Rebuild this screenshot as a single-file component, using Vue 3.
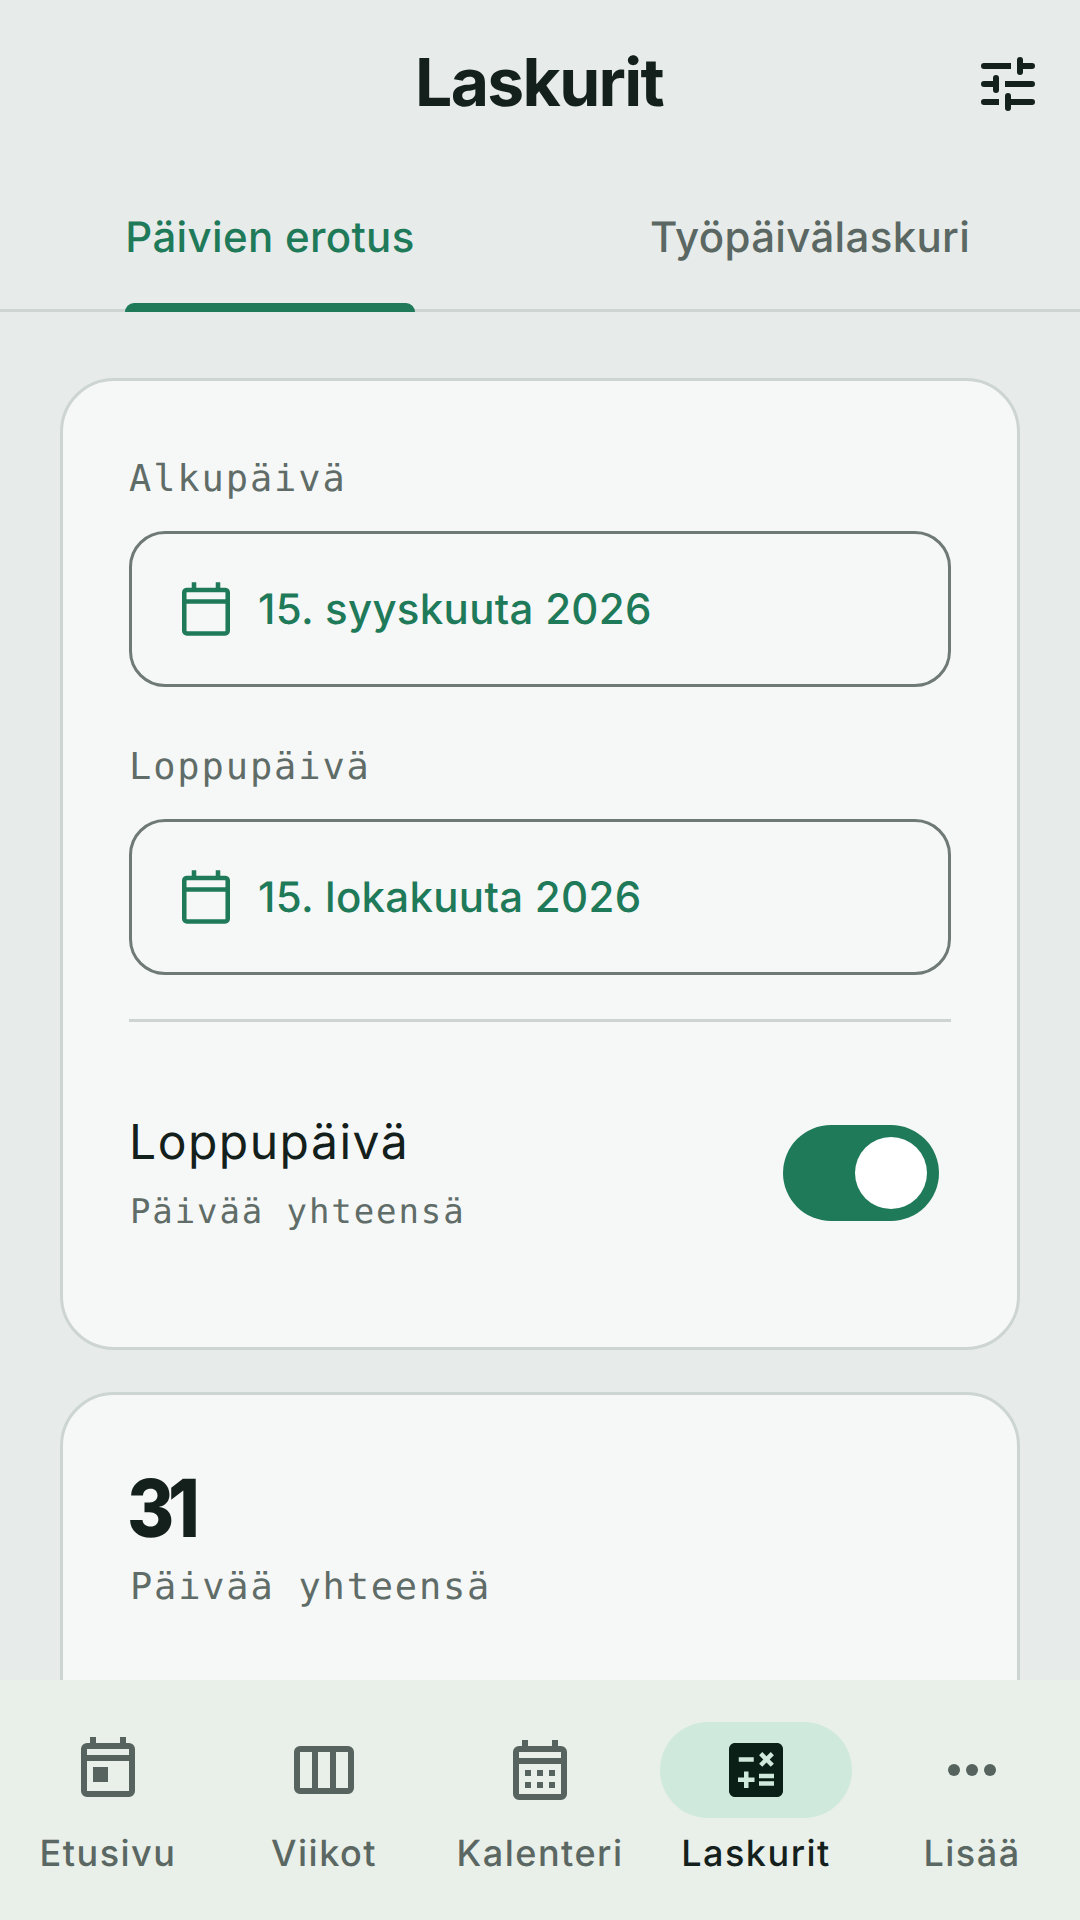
<template>
  <div class="screen">
    <header class="top">
      <span></span>
      <h1>Laskurit</h1>
      <button class="tune" aria-label="Asetukset">
        <svg viewBox="0 0 24 24" width="72" height="72" fill="#14201c">
          <path d="M4 5h9v2H4a1 1 0 0 1 0-2zM17 5h3a1 1 0 0 1 0 2h-3zM4 11h3v2H4a1 1 0 0 1 0-2zM11 11h9a1 1 0 0 1 0 2h-9zM4 17h5v2H4a1 1 0 0 1 0-2zM13 17h7a1 1 0 0 1 0 2h-7z" />
          <rect x="15" y="3" width="2" height="6" rx="1" />
          <rect x="7" y="9" width="2" height="6" rx="1" />
          <rect x="11" y="15" width="2" height="6" rx="1" />
        </svg>
      </button>
    </header>

    <div class="tabs">
      <div v-for="(tab, i) in tabs" :key="tab" class="tab" :class="{ active: i === 0 }">
        <span class="tab-label">{{ tab }}</span>
      </div>
    </div>

    <main class="content">
      <section class="card">
        <div v-for="d in dates" :key="d.label" class="date-group">
          <label class="mono-label">{{ d.label }}</label>
          <div class="date-field">
            <svg viewBox="0 0 24 24" width="64" height="64" fill="none" stroke="#1f7a5a" stroke-width="1.7">
              <rect x="3.85" y="4.85" width="16.3" height="16.3" rx="1" />
              <path d="M3.85 9.2h16.3M7.5 2v3M16.5 2v3" />
            </svg>
            <span>{{ d.value }}</span>
          </div>
        </div>
        <div class="divider"></div>
        <div class="switch-row">
          <div>
            <div class="switch-title">Loppupäivä</div>
            <div class="switch-sub">Päivää yhteensä</div>
          </div>
          <div class="switch"><div class="thumb"></div></div>
        </div>
      </section>

      <section class="card result">
        <div class="number">31</div>
        <div class="result-label">Päivää yhteensä</div>
      </section>
    </main>

    <nav class="bottom">
      <div v-for="item in nav" :key="item.label" class="nav-item" :class="{ active: item.active }">
        <div class="pill">
          <svg viewBox="0 0 24 24" width="72" height="72">
            <template v-if="item.icon === 'today'">
              <g fill="none" stroke="#56635e" stroke-width="2">
                <rect x="4" y="4" width="16" height="16" rx="1" />
                <path d="M4 8h16M7 1v3M17 1v3" />
              </g>
              <rect x="7" y="11" width="5" height="5" fill="#56635e" />
            </template>
            <template v-else-if="item.icon === 'week'">
              <g fill="none" stroke="#56635e" stroke-width="2">
                <rect x="3" y="5" width="18" height="14" rx="1" />
                <path d="M9 5v14M15 5v14" />
              </g>
            </template>
            <template v-else-if="item.icon === 'month'">
              <g fill="none" stroke="#56635e" stroke-width="2">
                <rect x="4" y="5" width="16" height="16" rx="1" />
                <path d="M4 9h16M7 2v3M17 2v3" />
              </g>
              <path fill="#56635e" d="M7 12h2v2H7zM11 12h2v2h-2zM15 12h2v2h-2zM7 16h2v2H7zM11 16h2v2h-2zM15 16h2v2h-2z" />
            </template>
            <template v-else-if="item.icon === 'calc'">
              <path fill="#0a1f16" d="M19 3H5c-1.1 0-2 .9-2 2v14c0 1.1.9 2 2 2h14c1.1 0 2-.9 2-2V5c0-1.100-.9-2-2-2z" />
              <path fill="#cfe9dc" d="M6.250 7.720h5v1.500h-5zM13 15.750h5v1.500h-5zM13 13.250h5v1.500h-5zM8 18h1.500v-2h2v-1.500h-2v-2H8v2H6V16h2zM14.090 10.950L15.500 9.540l1.410 1.410 1.060-1.060-1.410-1.420 1.410-1.410L16.910 6 15.500 7.410 14.090 6l-1.060 1.060 1.410 1.410-1.410 1.420z" />
            </template>
            <g v-else fill="#56635e">
              <circle cx="6" cy="12" r="2" />
              <circle cx="12" cy="12" r="2" />
              <circle cx="18" cy="12" r="2" />
            </g>
          </svg>
        </div>
        <span class="nav-label">{{ item.label }}</span>
      </div>
    </nav>
  </div>
</template>

<script setup>
const tabs = ['Päivien erotus', 'Työpäivälaskuri']

const dates = [
  { label: 'Alkupäivä', value: '15. syyskuuta 2026' },
  { label: 'Loppupäivä', value: '15. lokakuuta 2026' },
]

const nav = [
  { label: 'Etusivu', icon: 'today' },
  { label: 'Viikot', icon: 'week' },
  { label: 'Kalenteri', icon: 'month' },
  { label: 'Laskurit', icon: 'calc', active: true },
  { label: 'Lisää', icon: 'more' },
]
</script>

<style scoped>
.screen {
  width: 1080px;
  height: 1920px;
  display: flex;
  flex-direction: column;
  overflow: hidden;
  background: #e7ebe9;
  color: #14201c;
  font-family: Inter, "Liberation Sans", sans-serif;
  text-rendering: geometricPrecision;
}

.top {
  height: 164px;
  padding: 0 36px;
  display: grid;
  grid-template-columns: 1fr auto 1fr;
  align-items: center;
  box-sizing: border-box;
}

.top h1 {
  margin: 0 0 0 -2px;
  font-size: 66px;
  font-weight: 700;
  letter-spacing: -1.7px;
  line-height: 80px;
}

.tune {
  justify-self: end;
  width: 72px;
  height: 72px;
  margin-top: 4px;
  padding: 0;
  border: 0;
  background: none;
}

.tabs {
  display: flex;
  border-bottom: 3px solid #ccd5d2;
  height: 145px;
}

.tab {
  flex: 1;
  display: flex;
  justify-content: center;
  color: #5a6762;
  font-size: 42px;
  font-weight: 500;
  letter-spacing: 0.33px;
}

.tab-label {
  position: relative;
  height: 148px;
  line-height: 148px;
}

.tab.active {
  color: #1f7a5a;
}

.tab.active .tab-label::after {
  content: "";
  position: absolute;
  left: 0;
  right: 0;
  bottom: 0;
  height: 9px;
  background: #1f7a5a;
  border-radius: 9px 9px 0 0;
}

.content {
  flex: 1;
  min-height: 0;
  overflow: hidden;
  padding: 66px 60px 0;
  display: flex;
  flex-direction: column;
  gap: 42px;
}

.card {
  flex: none;
  background: #f6f8f7;
  border: 3px solid #ccd5d2;
  border-radius: 54px;
  padding: 66px;
}

.date-group + .date-group {
  margin-top: 48px;
}

.mono-label {
  display: block;
  height: 60px;
  margin-bottom: 24px;
  font-family: "DejaVu Sans Mono", monospace;
  font-size: 37px;
  line-height: 64px;
  letter-spacing: 1.9px;
  color: #5f6c67;
}

.date-field {
  height: 156px;
  box-sizing: border-box;
  border: 3px solid #6f7975;
  border-radius: 36px;
  padding: 0 48px 0 42px;
  display: flex;
  align-items: center;
  gap: 20px;
  color: #1f7a5a;
  font-size: 42px;
  font-weight: 500;
  letter-spacing: 0.3px;
}

.divider {
  height: 3px;
  margin-top: 44px;
  background: #ccd5d2;
}

.switch-row {
  margin-top: 102px;
  padding-right: 12px;
  display: flex;
  justify-content: space-between;
  align-items: flex-start;
  height: 157px;
}

.switch-title {
  margin-top: -11px;
  font-size: 48px;
  line-height: 58px;
  letter-spacing: 1.5px;
}

.switch-sub {
  margin-top: 17px;
  margin-left: 1px;
  font-family: "DejaVu Sans Mono", monospace;
  font-size: 34px;
  line-height: 48px;
  letter-spacing: 1.9px;
  color: #5f6c67;
}

.switch {
  width: 156px;
  height: 96px;
  margin-top: 1px;
  padding: 12px;
  box-sizing: border-box;
  border-radius: 48px;
  background: #1f7a5a;
  display: flex;
  justify-content: flex-end;
}

.thumb {
  width: 72px;
  height: 72px;
  border-radius: 50%;
  background: #fff;
}

.result {
  height: 400px;
}

.number {
  margin: 3px 0 0 -2px;
  font-size: 80px;
  font-weight: 800;
  line-height: 90px;
  letter-spacing: -7px;
  transform: scaleX(0.9);
  transform-origin: left center;
}

.result-label {
  margin-top: 6px;
  margin-left: 1px;
  font-family: "DejaVu Sans Mono", monospace;
  font-size: 37px;
  line-height: 54px;
  letter-spacing: 1.8px;
  color: #5f6c67;
}

.bottom {
  height: 240px;
  flex: none;
  padding-top: 42px;
  box-sizing: border-box;
  background: #e9efe9;
  display: grid;
  grid-template-columns: repeat(5, 1fr);
}

.nav-item {
  display: flex;
  flex-direction: column;
  align-items: center;
  color: #5a6762;
}

.nav-item.active {
  color: #14201c;
}

.pill {
  width: 192px;
  height: 96px;
  border-radius: 48px;
  display: flex;
  align-items: center;
  justify-content: center;
}

.nav-item.active .pill {
  background: #cfe9dc;
}

.nav-label {
  margin-top: 12px;
  font-size: 36px;
  font-weight: 500;
  line-height: 46px;
  letter-spacing: 1.5px;
}
</style>
